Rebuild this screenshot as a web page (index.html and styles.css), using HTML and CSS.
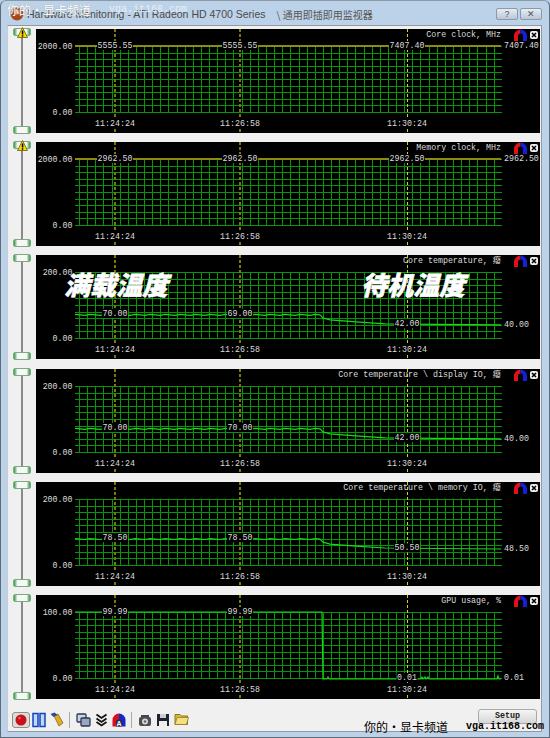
FILE: index.html
```html
<!DOCTYPE html>
<html lang="zh-CN">
<head>
    <meta charset="UTF-8">
    <title>Hardware Monitoring - ATI Radeon HD 4700 Series</title>
    <link rel="stylesheet" href="styles.css">
</head>
<body>
    <div class="window">
        <div class="titlebar">
            <svg class="app-icon" width="16" height="16" viewBox="0 0 16 16"><circle cx="8" cy="8" r="6.5" fill="#a8481c"/><circle cx="8" cy="6" r="2.5" fill="#e9a15c"/></svg>
            <span class="title">Hardware Monitoring - ATI Radeon HD 4700 Series</span>
            <span class="title-cn">\ 通用即插即用监视器</span>
            <div class="wm-buttons">
                <span class="wm-btn">?</span>
                <span class="wm-btn">✕</span>
            </div>
            <div class="watermark-top"><span>你的・显卡频道</span><span class="watermark-url">vga.it168.com</span></div>
        </div>
        <div class="content">
            <div id="panels" class="panels"></div>
            <div class="toolbar">
                <span class="tool tool-on"><svg width="14" height="14" viewBox="0 0 14 14"><circle cx="7" cy="7" r="5.5" fill="#c8101a"/><circle cx="5.5" cy="5" r="1.5" fill="#e8505a"/></svg></span>
                <span class="tool"><svg width="14" height="16" viewBox="0 0 14 16"><rect x="1" y="1.5" width="5" height="13" fill="#b8dcf8" stroke="#1440c0" stroke-width="1.5"/><rect x="8" y="1.5" width="5" height="13" fill="#b8dcf8" stroke="#1440c0" stroke-width="1.5"/></svg></span>
                <span class="tool"><svg width="14" height="15" viewBox="0 0 14 15"><path d="M4 4l4-2 5 9-4 3z" fill="#e0ac24" stroke="#7a5c10" stroke-width=".7"/><path d="M0.5 2l4-1.5 3 2.5-4 2z" fill="#2f4a90"/></svg></span>
                <span class="sep"></span>
                <span class="tool"><svg width="15" height="14" viewBox="0 0 15 14"><rect x="1" y="1" width="9" height="8" rx="1" fill="#c9d6ea" stroke="#2d3550" stroke-width="1.3"/><rect x="5" y="5" width="9" height="8" rx="1" fill="#98a8c4" stroke="#2d3550" stroke-width="1.3"/></svg></span>
                <span class="tool"><svg width="13" height="14" viewBox="0 0 13 14"><path d="M1.5 1.5l5 3.5 5-3.5M1.5 5.5l5 3.5 5-3.5M1.5 9l5 3.5 5-3.5" fill="none" stroke="#111" stroke-width="1.8"/></svg></span>
                <span class="tool"><svg width="14" height="14" viewBox="0 0 14 14"><path d="M0.5 13.5V7a6.5 6.5 0 0 1 6.5-6.5v13z" fill="#d8101a"/><path d="M13.5 13.5V7A6.5 6.5 0 0 0 7 .5v13z" fill="#1428c8"/><path d="M4 13.5V9.5a3 3 0 0 1 6 0v4z" fill="#222c50"/><text x="4.4" y="13" class="tool-a">A</text></svg></span>
                <span class="sep"></span>
                <span class="tool"><svg width="14" height="14" viewBox="0 0 14 14"><path d="M4 5V3h6v2" fill="none" stroke="#445" stroke-width="2"/><rect x="1" y="4" width="12" height="9" rx="2" fill="#4a5050"/><circle cx="7" cy="8.5" r="3" fill="#d8d8d8"/><circle cx="7" cy="8.5" r="1.3" fill="#666"/></svg></span>
                <span class="tool"><svg width="14" height="14" viewBox="0 0 14 14"><path d="M1 1h12v12H1z" fill="#20232e"/><rect x="4" y="1" width="6" height="4" fill="#c8ccd8"/><rect x="3" y="8" width="8" height="5" fill="#eee"/></svg></span>
                <span class="tool"><svg width="15" height="13" viewBox="0 0 15 13"><path d="M1 1.500h5l1.500 1.500h6v8.500H1z" fill="#d8b838" stroke="#8a7420"/><path d="M3 4.500h11.500l-2 7H1z" fill="#f3e07c" stroke="#8a7420" stroke-width=".7"/></svg></span>
                <button class="setup">Setup</button>
            </div>
            <div class="watermark-bottom"><span>你的・显卡频道</span><span class="watermark-url">vga.it168.com</span></div>
        </div>
    </div>
    <script src="chart.js"></script>
</body>
</html>
```

FILE: styles.css
```css
html, body {
    margin: 0;
    padding: 0;
    background: #b9d1ea;
}
.window {
    position: relative;
    width: 550px;
    height: 738px;
    box-sizing: border-box;
    border: 1px solid #5e6a78;
    border-top-color: #8b98a6;
    border-radius: 6px 6px 0 0;
    background: #bcd2e8;
    padding: 0 7px 5px 6px;
    display: flex;
    flex-direction: column;
    overflow: hidden;
    font-family: "Liberation Mono", monospace;
}
.titlebar {
    height: 24px;
    box-sizing: border-box;
    padding-top: 2px;
    flex: none;
    display: flex;
    align-items: center;
    gap: 2px;
    font-family: "Liberation Sans", sans-serif;
    font-size: 10.5px;
    color: #4a4a4a;
}
.app-icon { margin-left: 2px; }
.title { white-space: nowrap; }
.title-cn {
    margin-left: 9px;
    font-family: "Noto Sans CJK SC", sans-serif;
    font-size: 10px;
    color: #555;
}
.wm-buttons {
    margin-left: auto;
    display: flex;
    gap: 2px;
}
.wm-btn {
    width: 20px;
    height: 10px;
    border: 1px solid #8a9aab;
    border-radius: 2px;
    background: linear-gradient(#e6edf5, #b9c7d6);
    color: #555;
    font-size: 9px;
    line-height: 10px;
    text-align: center;
}
.watermark-top {
    position: absolute;
    left: 6px;
    top: 0;
    display: flex;
    gap: 18px;
    font-family: "Noto Sans CJK SC", sans-serif;
    font-size: 12px;
    white-space: nowrap;
    color: #fff;
    text-shadow: 0 0 1px #8a8a8a;
}
.watermark-top .watermark-url {
    margin-top: 3px;
    font-weight: normal;
    color: #e8eef4;
    text-shadow: none;
}
.watermark-url {
    font-family: "Liberation Mono", monospace;
    font-size: 10px;
    font-weight: bold;
}
.content {
    position: relative;
    flex: 1;
    background: #f0f0f0;
    border: 1px solid #8f9aa6;
    border-left-color: #c4ccd4;
    display: flex;
    flex-direction: column;
}
.panels {
    display: flex;
    flex-direction: column;
    gap: 9.2px;
    padding: 3px 1px 0 0;
}
.panel-row {
    display: flex;
    height: 104px;
}
.slider {
    position: relative;
    width: 28px;
    flex: none;
    display: flex;
    flex-direction: column;
    align-items: center;
    justify-content: space-between;
}
.slider::before {
    content: "";
    position: absolute;
    top: 6px;
    bottom: 6px;
    left: 13px;
    width: 2px;
    background: #8a8a8a;
}
.thumb {
    position: relative;
    box-sizing: border-box;
    width: 18px;
    height: 8px;
    margin: -1px 0 0;
    border-radius: 2px;
    background: linear-gradient(90deg, #2f9a45, #f6f8f6 22%, #f6f8f6 78%, #2f9a45);
    border: 1px solid #7fa886;
}
.thumb + .thumb { margin: 0 0 -1px; }
.warn { position: absolute; left: 3px; top: -2px; }
.chart {
    display: block;
    background: #000;
}
.label {
    font-family: "Liberation Mono", "Noto Sans CJK SC", monospace;
    font-size: 8.3px;
    fill: #dcdcdc;
}
.label-end { text-anchor: end; }
.label-mid { text-anchor: middle; }
.label-bg { fill: #000; }
.grid-line { stroke: #089408; stroke-width: 1; }
.marker { stroke: #7c7806; stroke-width: 2; stroke-dasharray: 3 2; }
.marker-last { stroke: #d8d020; stroke-width: 1; }
.trace { fill: none; stroke-width: 1.2; }
.trace-clock { stroke: #8c8c10; stroke-width: 2; }
.trace-temp { stroke: #18d818; }
.big-label {
    font-family: "Noto Sans CJK SC", sans-serif;
    font-weight: 900;
    font-size: 26px;
    font-style: italic;
    fill: #fff;
    stroke: #fff;
    stroke-width: 0.5;
}
.toolbar {
    position: relative;
    flex: 1;
    display: flex;
    align-items: center;
    margin-top: 5px;
    padding: 5px 4px 0 4px;
    background: #f0f0f0;
}
.tool {
    width: 18px;
    height: 20px;
    display: flex;
    align-items: center;
    justify-content: center;
}
.tool-on {
    box-sizing: border-box;
    height: 16px;
    border: 1px solid #8e8e8e;
    border-radius: 3px;
    background: #dcdcdc;
}
.tool-a { font-family: "Liberation Sans", sans-serif; font-size: 7px; font-weight: bold; fill: #fff; }
.sep {
    width: 1px;
    height: 16px;
    background: #aaa;
    margin: 0 4px 0 3px;
}
.setup {
    margin: 0 0 6px auto;
    width: 59px;
    height: 15px;
    padding: 0 0 2px;
    border: 1px solid #a8a8a8;
    border-radius: 3px;
    background: linear-gradient(#f6f6f6, #d6d6d6);
    font-family: "Liberation Mono", monospace;
    font-size: 8.4px;
    font-weight: bold;
    color: #222;
}
.watermark-bottom {
    position: absolute;
    left: 356px;
    bottom: -2px;
    display: flex;
    align-items: center;
    gap: 18px;
    white-space: nowrap;
    font-family: "Noto Sans CJK SC", sans-serif;
    font-size: 12px;
    line-height: 13px;
    color: #000;
}
```

FILE: chart.js
```js
// one entry per monitored value, scale is what the top grid line stands for
var PANELS = [
    { title: 'Core clock, MHz', top: '2000.00', kind: 'clock', warn: true, vals: ['5555.55', '5555.55', '7407.40', '7407.40'] },
    { title: 'Memory clock, MHz', top: '2000.00', kind: 'clock', warn: true, vals: ['2962.50', '2962.50', '2962.50', '2962.50'] },
    { title: 'Core temperature, 癈', top: '200.00', kind: 'temp', vals: ['70.00', '69.00', '42.00', '40.00'], big: true },
    { title: 'Core temperature \\ display IO, 癈', top: '200.00', kind: 'temp', vals: ['70.00', '70.00', '42.00', '40.00'] },
    { title: 'Core temperature \\ memory IO, 癈', top: '200.00', kind: 'temp', vals: ['78.50', '78.50', '50.50', '48.50'] },
    { title: 'GPU usage, %', top: '100.00', kind: 'usage', vals: ['99.99', '99.99', '0.01', '0.01'] }
];

var MARKS = [[79, '11:24:24'], [204, '11:26:58'], [371, '11:30:24']];
var GRID_TOP = 17;
var GRID_BOTTOM = 83;
var SVG_NS = 'http://www.w3.org/2000/svg';

function el(name, attrs, text) {
    var node = document.createElementNS(SVG_NS, name);
    for (var key in attrs) node.setAttribute(key, attrs[key]);
    if (text) node.textContent = text;
    return node;
}

function tempY(value) {
    return GRID_BOTTOM - value / 200 * 66;
}

function curve(p) {
    if (p.kind === 'clock') return '39,' + GRID_TOP + ' 465,' + GRID_TOP;
    if (p.kind === 'usage') {
        return '39,17 286,17 287,84 291,84 292,82 293,84 385,84 386,82 387,84 389,82 390,84 ' +
            '392,82 393,84 461,84 462,81 463,84 465,84';
    }
    var y = tempY(parseFloat(p.vals[0]));
    var e = tempY(parseFloat(p.vals[3]));
    var pts = [];
    // load part, the sensor wobbles a little
    for (var x = 39; x < 284; x += 5) {
        pts.push(x + ',' + (y + (x % 3 === 0 ? -0.5 : x % 3 === 1 ? 0.4 : 0)));
    }
    pts.push('284,' + y, '287,' + (y + 3), '294,' + (y + 5), '320,' + (y + 7), '349,' + (e - 1), '400,' + (e - 0.5), '465,' + e);
    return pts.join(' ');
}

// the monitor blanks the trace behind a reading
function addLabel(svg, x, y, text) {
    var w = text.length * 5 + 1;
    svg.appendChild(el('rect', { 'class': 'label-bg', x: x - w / 2, y: y - 7, width: w, height: 9 }));
    svg.appendChild(el('text', { 'class': 'label label-mid', x: x, y: y }, text));
}

function buildChart(p) {
    var svg = el('svg', { 'class': 'chart', width: 504, height: 104 });
    var i;
    for (i = 0; i <= 51; i++) {
        var x = Math.round(43 + i * 8.13) + 0.5;
        svg.appendChild(el('line', { 'class': 'grid-line', x1: x, x2: x, y1: GRID_TOP, y2: GRID_BOTTOM }));
    }
    for (i = 0; i <= 10; i++) {
        var y = Math.round(GRID_TOP + i * 6.6) + 0.5;
        svg.appendChild(el('line', { 'class': 'grid-line', x1: 39, x2: 466, y1: y, y2: y }));
    }
    MARKS.forEach(function (m, n) {
        var mx = n === 2 ? m[0] + 0.5 : m[0];
        svg.appendChild(el('line', { 'class': n === 2 ? 'marker marker-last' : 'marker', x1: mx, x2: mx, y1: 0, y2: 104 }));
    });
    svg.appendChild(el('polyline', { 'class': 'trace ' + (p.kind === 'clock' ? 'trace-clock' : 'trace-temp'), points: curve(p) }));

    if (p.kind === 'clock') {
        MARKS.forEach(function (m, n) { addLabel(svg, m[0], 19, p.vals[n]); });
        svg.appendChild(el('text', { 'class': 'label', x: 468, y: 19 }, p.vals[3]));
    } else if (p.kind === 'usage') {
        addLabel(svg, MARKS[0][0], 19, p.vals[0]);
        addLabel(svg, MARKS[1][0], 19, p.vals[1]);
        addLabel(svg, MARKS[2][0], 85, p.vals[2]);
        svg.appendChild(el('text', { 'class': 'label', x: 468, y: 85 }, p.vals[3]));
    } else {
        addLabel(svg, MARKS[0][0], tempY(parseFloat(p.vals[0])) + 1, p.vals[0]);
        addLabel(svg, MARKS[1][0], tempY(parseFloat(p.vals[0])) + 1, p.vals[1]);
        addLabel(svg, MARKS[2][0], tempY(parseFloat(p.vals[2])) + 2, p.vals[2]);
        svg.appendChild(el('text', { 'class': 'label', x: 468, y: tempY(parseFloat(p.vals[3])) + 2 }, p.vals[3]));
    }

    svg.appendChild(el('text', { 'class': 'label label-end', x: 36.5, y: 20 }, p.top));
    svg.appendChild(el('text', { 'class': 'label label-end', x: 36.5, y: 86 }, '0.00'));
    MARKS.forEach(function (m) { addLabel(svg, m[0], 97, m[1]); });

    svg.appendChild(el('text', { 'class': 'label label-end', x: 465, y: 8 }, p.title));
    // fan-shaped min/max toggle and the close box
    svg.appendChild(el('path', { d: 'M478 12V7a6.500 6.500 0 0 1 6.500-6.500v4a2.500 2.500 0 0 0-2.500 2.500v5z', fill: '#e0101a' }));
    svg.appendChild(el('path', { d: 'M491 12V7a6.500 6.500 0 0 0-6.500-6.500v4a2.500 2.500 0 0 1 2.500 2.500v5z', fill: '#1420d8' }));
    svg.appendChild(el('rect', { x: 494, y: 2, width: 8, height: 8, rx: 2, fill: '#eee' }));
    svg.appendChild(el('path', { d: 'M496 4l4 4m0-4l-4 4', stroke: '#000', 'stroke-width': 1.5 }));

    if (p.big) {
        svg.appendChild(el('text', { 'class': 'big-label', x: 28, y: 40 }, '满载温度'));
        svg.appendChild(el('text', { 'class': 'big-label', x: 325, y: 40 }, '待机温度'));
    }
    return svg;
}

var holder = document.getElementById('panels');
PANELS.forEach(function (p) {
    var row = document.createElement('div');
    row.className = 'panel-row';
    var slider = document.createElement('div');
    slider.className = 'slider';
    slider.innerHTML = '<div class="thumb"></div><div class="thumb"></div>';
    if (p.warn) {
        slider.firstChild.innerHTML = '<svg class="warn" width="11" height="11" viewBox="0 0 11 11"><path d="M5.500 0.500L10.500 10.500H0.500z" fill="#f5d90a" stroke="#6a5a00" stroke-width=".8"/><rect x="4.800" y="3.500" width="1.500" height="4" fill="#000"/><rect x="4.800" y="8.200" width="1.500" height="1.500" fill="#000"/></svg>';
    }
    row.appendChild(slider);
    row.appendChild(buildChart(p));
    holder.appendChild(row);
});
```
